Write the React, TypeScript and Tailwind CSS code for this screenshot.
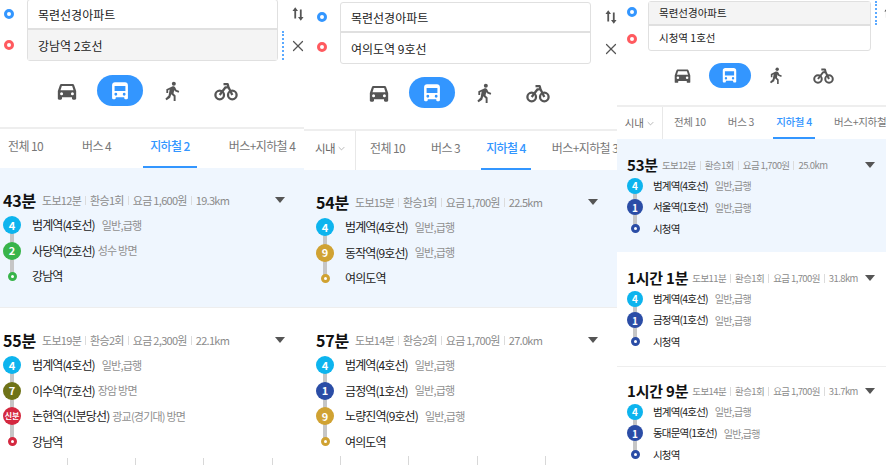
import { X } from 'lucide-react';

const LINE_COLORS: Record<string, string> = {
  '4': 'bg-[#0db4ee]',
  '2': 'bg-[#38b44a]',
  '7': 'bg-[#6f7318]',
  '9': 'bg-[#d0a232]',
  '1': 'bg-[#2b4da6]',
  '신분': 'bg-[#d4283f]',
};

const END_COLORS: Record<string, string> = {
  green: 'border-[#38b44a]',
  red: 'border-[#d4283f]',
  gold: 'border-[#d0a232]',
  navy: 'border-[#2b4da6]',
};

type Stop = { line: string; name: string; note: string };
type Route = {
  time: string;
  walk: string;
  transfer: string;
  fare: string;
  dist: string;
  stops: Stop[];
  end: string;
  endColor: string;
};

const sizes = {
  large: {
    card: 'pt-[20px]',
    time: 'text-[16px] h-[24px]',
    meta: 'text-[11px] ml-[6px] tracking-[-0.7px]',
    row: 'h-[25.7px]',
    badge: 'w-[18px] h-[18px]',
    badgeText: 'text-[11px]',
    smallBadge: 'text-[8px]',
    stopText: 'text-[12px] ml-[11px] tracking-[-0.9px]',
    endText: 'text-[12px] ml-[15px] tracking-[-0.9px]',
    noteText: 'text-[11px] tracking-[-0.8px]',
    rail: 'left-[7px] top-[13px] h-[26px]',
    end: 'w-[9px] h-[9px] border-[3px] ml-[5px]',
    pill: 'w-[46px] h-[31px]',
    slot: 'w-[53px] h-[31px]',
    icon: 'w-[20px] h-[20px]',
    bike: 'w-[24px] h-[24px]',
    input: 'h-[30px] text-[12px] pl-[10px] pt-[1px]',
    tab: 'text-[12px] tracking-[-0.6px] pb-[3px]',
  },
  small: {
    card: 'pt-[16px]',
    time: 'text-[15px] h-[20px]',
    meta: 'text-[9.5px] ml-[4px] tracking-[-0.6px]',
    row: 'h-[21.5px]',
    badge: 'w-[16px] h-[16px]',
    badgeText: 'text-[10px]',
    smallBadge: 'text-[7px]',
    stopText: 'text-[10.5px] ml-[10px] tracking-[-0.8px]',
    endText: 'text-[10.5px] ml-[13px] tracking-[-0.8px]',
    noteText: 'text-[10px] tracking-[-0.7px]',
    rail: 'left-[6px] top-[11px] h-[22px]',
    end: 'w-[9px] h-[9px] border-[3px] ml-[4px]',
    pill: 'w-[42px] h-[25px]',
    slot: 'w-[47px] h-[25px]',
    icon: 'w-[17px] h-[17px]',
    bike: 'w-[21px] h-[21px]',
    input: 'h-[24px] text-[10.5px] pl-[10px]',
    tab: 'text-[10.5px] tracking-[-0.3px]',
  },
};

type Size = typeof sizes.large;

const CarIcon = ({ className }: { className: string }) => (
  <svg viewBox="0 0 24 24" className={className} fill="#555">
    <path d="M5.500 3.500h13c1 0 1.800.6 2.100 1.500L23 12v9c0 .8-.6 1.400-1.400 1.400h-2.200c-.8 0-1.400-.6-1.400-1.400v-1.400H6V21c0 .8-.6 1.400-1.400 1.400H2.400C1.600 22.400 1 21.800 1 21v-9l2.400-7c.3-.9 1.100-1.500 2.100-1.500zM5.800 6 4.200 11h15.600l-1.600-5zM5.500 13.500a1.800 1.800 0 1 0 0 3.600 1.800 1.800 0 0 0 0-3.600zm13 0a1.800 1.800 0 1 0 0 3.600 1.800 1.800 0 0 0 0-3.600z" fillRule="evenodd" />
  </svg>
);

const BusIcon = ({ className }: { className: string }) => (
  <svg viewBox="0 0 24 24" className={className} fill="#fff">
    <path d="M6 1.500h12c2 0 3.500 1.500 3.500 3.500v15.500c0 .8-.5 1.300-1.200 1.300h-2c-.7 0-1.200-.5-1.200-1.300v-1H6.900v1c0 .8-.5 1.300-1.200 1.300h-2c-.7 0-1.200-.5-1.200-1.300V5c0-2 1.500-3.500 3.500-3.500zM5.500 6v6h13V6zm1.500 8.200a1.700 1.700 0 1 0 0 3.400 1.700 1.700 0 0 0 0-3.400zm10 0a1.700 1.700 0 1 0 0 3.400 1.700 1.700 0 0 0 0-3.400z" fillRule="evenodd" />
  </svg>
);

const WalkIcon = ({ className }: { className: string }) => (
  <svg viewBox="0 0 24 24" className={className} fill="#555">
    <circle cx="13" cy="3.200" r="2.400" />
    <path d="M11 6.500c1.500-.4 3 .1 3.700 1.300l1.300 2.700 3.500 1.500-.8 2-4.300-1.800-.9-1.500-.9 4.300 2.500 2.500v6.500h-2.300v-5.400l-2.900-2.600-1.300 4.100L4.300 23l-1.500-1.700 3.900-3.900L8 10.300l-1.800.9v3.200H4V9.800z" />
  </svg>
);

const BikeIcon = ({ className }: { className: string }) => (
  <svg viewBox="0 0 24 24" className={className} fill="none" stroke="#555" strokeWidth="2.300">
    <circle cx="5.700" cy="16" r="4.300" />
    <circle cx="18.300" cy="16" r="4.300" />
    <path d="M5.700 16 11.500 8.300h3L18.300 16M9.500 5.200h4.200l.8 3.100" strokeLinejoin="round" />
  </svg>
);

const SwapIcon = ({ className }: { className: string }) => (
  <svg viewBox="0 0 16 18" className={className} fill="#555">
    <path d="M4.300 0 8 5H5.500v10h-2.400V5H.6zM10.500 3h2.400v10h2.500l-3.700 5-3.700-5h2.500z" />
  </svg>
);

const Dot = ({ color }: { color: string }) => (
  <span className={`block w-[10px] h-[10px] rounded-full border-[3px] bg-white ${color}`} />
);

const Meta = ({ route, size }: { route: Route; size: Size }) => {
  const parts = [route.walk, route.transfer, route.fare, route.dist];
  return (
    <div className={`flex items-center text-[#8b8b8b] whitespace-nowrap ${size.meta}`}>
      {parts.map((part, i) => (
        <span key={part} className="flex items-center">
          {i > 0 && <span className="w-px h-[9px] bg-[#dcdcdc] mx-[4px]" />}
          {part}
        </span>
      ))}
    </div>
  );
};

const RouteCard = ({
  route,
  size,
  active,
  pad,
  endPad,
  height,
}: {
  route: Route;
  size: Size;
  active?: boolean;
  pad: string;
  endPad: string;
  height: string;
}) => (
  <div className={`shrink-0 border-b border-[#eeeeee] ${size.card} ${height} ${pad} ${active ? 'bg-[#eff6fe]' : 'bg-white'}`}>
    <div className={`flex items-center ${endPad}`}>
      <div className={`font-bold text-[#111] tracking-[-0.2px] flex items-center whitespace-nowrap ${size.time}`}>{route.time}</div>
      <Meta route={route} size={size} />
      <svg viewBox="0 0 10 6" className="ml-auto w-[10px] h-[6px] shrink-0" fill="#555">
        <path d="M0 0h10L5 6z" />
      </svg>
    </div>
    {route.stops.map((stop) => (
      <div key={stop.name} className={`relative flex items-center ${size.row}`}>
        <span className={`absolute w-[4px] bg-[#c6c6c6] ${size.rail}`} />
        <span
          className={`relative shrink-0 rounded-full flex items-center justify-center text-white font-bold whitespace-nowrap ${size.badge} ${stop.line === '신분' ? size.smallBadge : size.badgeText} ${LINE_COLORS[stop.line]}`}
        >
          {stop.line}
        </span>
        <span className={`text-[#222] whitespace-nowrap ${size.stopText}`}>{stop.name}</span>
        <span className={`text-[#8f8f8f] whitespace-nowrap ${size.noteText} ${stop.note === EXPRESS ? 'ml-[7px]' : 'ml-[3px]'}`}>{stop.note}</span>
      </div>
    ))}
    <div className={`relative flex items-center ${size.row}`}>
      <span className={`relative shrink-0 rounded-full bg-white ${size.end} ${END_COLORS[route.endColor]}`} />
      <span className={`text-[#222] whitespace-nowrap ${size.endText}`}>{route.end}</span>
    </div>
  </div>
);

const Tab = ({ label, active, className }: { label: string; active?: boolean; className: string }) => (
  <div
    className={`h-full flex items-center whitespace-nowrap border-b-2 ${className} ${active ? 'text-[#3396ff] font-medium border-[#3396ff]' : 'text-[#777] border-transparent'}`}
  >
    {label}
  </div>
);

const TransportModes = ({ size, className }: { size: Size; className: string }) => (
  <div className={`flex items-center shrink-0 ${className}`}>
    <div className={`flex items-center justify-center ${size.slot}`}>
      <CarIcon className={size.icon} />
    </div>
    <div className={`flex items-center justify-center ${size.slot}`}>
      <div className={`rounded-full bg-[#3396ff] flex items-center justify-center ${size.pill}`}>
        <BusIcon className={size.icon} />
      </div>
    </div>
    <div className={`flex items-center justify-center ${size.slot}`}>
      <WalkIcon className={size.icon} />
    </div>
    <div className={`flex items-center justify-center ${size.slot}`}>
      <BikeIcon className={size.bike} />
    </div>
  </div>
);

const r = (
  time: string,
  walk: string,
  transfer: string,
  fare: string,
  dist: string,
  stops: [string, string, string][],
  end: string,
  endColor: string,
): Route => ({
  time,
  walk,
  transfer,
  fare,
  dist,
  stops: stops.map(([line, name, note]) => ({ line, name, note })),
  end,
  endColor,
});

const EXPRESS = '일반,급행';

const App = () => {
  const large = sizes.large;
  const small = sizes.small;

  return (
    <div className="flex w-[886px] h-[465px] overflow-hidden bg-white" style={{ fontFamily: '"Noto Sans CJK KR", "Noto Sans", sans-serif' }}>
      {/* first capture */}
      <div className="w-[304px] shrink-0 -mt-[1px] flex flex-col overflow-hidden">
        <div className="flex shrink-0">
          <div className="w-[18px] shrink-0 flex flex-col items-center pt-[10px] gap-[21px]">
            <Dot color="border-[#3396ff]" />
            <Dot color="border-[#ff5a5f]" />
          </div>
          <div className="ml-[9px] w-[251px] shrink-0 rounded-[3px] border border-[#e0e0e0] text-[#222]">
            <div className={`flex items-center border-b-2 border-[#e0e0e0] ${large.input}`}>목련선경아파트</div>
            <div className={`flex items-center bg-[#f4f4f4] ${large.input}`}>강남역 2호선</div>
          </div>
          <div className="ml-[4px] mt-[32px] h-[29px] shrink-0 border-l-2 border-dotted border-[#5aa9ff]" />
          <div className="ml-[5px] shrink-0 flex flex-col items-center pt-[7px] gap-[15px]">
            <SwapIcon className="w-[12px] h-[16px]" />
            <X size={18} color="#555" strokeWidth={1.6} />
          </div>
        </div>
        <TransportModes size={large} className="mt-[14px] pl-[40px]" />
        <div className="mt-[21px] h-[41px] shrink-0 border-t-2 border-[#eeeeee] flex gap-[25px] pl-[1px] overflow-hidden">
          <Tab label="전체 10" className={`${large.tab} px-[7px]`} />
          <Tab label="버스 4" className={`${large.tab} px-[7px]`} />
          <Tab label="지하철 2" active className={`${large.tab} px-[7px]`} />
          <Tab label="버스+지하철 4" className={`${large.tab} px-[7px]`} />
        </div>
        <RouteCard
          active
          size={large}
          pad="pl-[3px]"
          endPad="pr-[19px]"
          height="h-[140px]"
          route={r('43분', '도보12분', '환승1회', '요금 1,600원', '19.3km', [['4', '범계역(4호선)', EXPRESS], ['2', '사당역(2호선)', '성수 방면']], '강남역', 'green')}
        />
        <RouteCard
          size={large}
          pad="pl-[3px]"
          endPad="pr-[19px]"
          height="h-[150px] !border-b-0"
          route={r('55분', '도보19분', '환승2회', '요금 2,300원', '22.1km', [['4', '범계역(4호선)', EXPRESS], ['7', '이수역(7호선)', '장암 방면'], ['신분', '논현역(신분당선)', '광교(경기대) 방면']], '강남역', 'red')}
        />
        <div className="flex pl-[67px] shrink-0">
          <span className="w-[68px] h-[10px] border-l border-[#d8d8d8]" />
          <span className="w-[68px] h-[10px] border-l border-[#d8d8d8]" />
          <span className="w-[69px] h-[10px] border-l border-[#d8d8d8]" />
          <span className="w-[32px] h-[10px] border-l border-[#d8d8d8]" />
        </div>
      </div>

      {/* second capture */}
      <div className="w-[313px] shrink-0 pt-[2px] flex flex-col overflow-hidden">
        <div className="flex shrink-0">
          <div className="w-[18px] shrink-0 ml-[9px] flex flex-col items-center pt-[10px] gap-[20px]">
            <Dot color="border-[#3396ff]" />
            <Dot color="border-[#ff5a5f]" />
          </div>
          <div className="ml-[9px] w-[251px] shrink-0 rounded-[3px] border border-[#e0e0e0] text-[#222]">
            <div className={`flex items-center border-b-2 border-[#e0e0e0] ${large.input}`}>목련선경아파트</div>
            <div className={`flex items-center ${large.input}`}>여의도역 9호선</div>
          </div>
          <div className="ml-[11px] shrink-0 flex flex-col items-center pt-[7px] gap-[15px]">
            <SwapIcon className="w-[12px] h-[16px]" />
            <X size={18} color="#555" strokeWidth={1.6} />
          </div>
        </div>
        <TransportModes size={large} className="mt-[13px] pl-[48px]" />
        <div className="mt-[21px] h-[41px] shrink-0 border-t-2 border-[#eeeeee] flex overflow-hidden">
          <div className="w-[52px] shrink-0 flex items-center justify-end pr-[10px] pb-[4px] gap-[3px] border-r border-[#e8e8e8] text-[11.5px] tracking-[-0.6px] text-[#666]">
            시내
            <svg viewBox="0 0 10 6" className="w-[7px] h-[5px]" fill="none" stroke="#999" strokeWidth="1">
              <path d="M1 1l4 4 4-4" />
            </svg>
          </div>
          <div className="flex gap-[16px] pl-[9px]">
            <Tab label="전체 10" className={`${large.tab} px-[5px]`} />
            <Tab label="버스 3" className={`${large.tab} px-[5px]`} />
            <Tab label="지하철 4" active className={`${large.tab} px-[5px]`} />
            <Tab label="버스+지하철 3" className={`${large.tab} px-[5px]`} />
          </div>
        </div>
        <RouteCard
          active
          size={large}
          pad="pl-[12px]"
          endPad="pr-[19px]"
          height="h-[138px]"
          route={r('54분', '도보15분', '환승1회', '요금 1,700원', '22.5km', [['4', '범계역(4호선)', EXPRESS], ['9', '동작역(9호선)', EXPRESS]], '여의도역', 'gold')}
        />
        <RouteCard
          size={large}
          pad="pl-[12px]"
          endPad="pr-[19px]"
          height="h-[148px] !border-b-0"
          route={r('57분', '도보14분', '환승2회', '요금 1,700원', '27.0km', [['4', '범계역(4호선)', EXPRESS], ['1', '금정역(1호선)', EXPRESS], ['9', '노량진역(9호선)', EXPRESS]], '여의도역', 'gold')}
        />
        <div className="flex pl-[36px] shrink-0">
          <span className="w-[68px] h-[10px] border-l border-[#d8d8d8]" />
          <span className="w-[69px] h-[10px] border-l border-[#d8d8d8]" />
          <span className="w-[68px] h-[10px] border-l border-[#d8d8d8]" />
          <span className="w-[68px] h-[10px] border-l border-[#d8d8d8]" />
        </div>
      </div>

      {/* third capture, slightly smaller */}
      <div className="w-[269px] shrink-0 pt-[1px] flex flex-col overflow-hidden">
        <div className="flex shrink-0">
          <div className="w-[16px] shrink-0 ml-[7px] flex flex-col items-center pt-[6px] gap-[17px]">
            <Dot color="border-[#3396ff]" />
            <Dot color="border-[#ff5a5f]" />
          </div>
          <div className="ml-[8px] w-[223px] shrink-0 rounded-[3px] border border-[#e0e0e0] text-[#222]">
            <div className={`flex items-center bg-[#f4f4f4] border-b-2 border-[#e0e0e0] ${small.input}`}>목련선경아파트</div>
            <div className={`flex items-center ${small.input}`}>시청역 1호선</div>
          </div>
          <div className="ml-[4px] h-[24px] shrink-0 border-l-2 border-dotted border-[#5aa9ff]" />
          <div className="ml-[7px] shrink-0 pt-[6px]">
            <SwapIcon className="w-[10px] h-[14px]" />
          </div>
        </div>
        <TransportModes size={small} className="mt-[12px] pl-[42px]" />
        <div className="mt-[17px] h-[34px] shrink-0 border-t-2 border-[#eeeeee] flex overflow-hidden">
          <div className="w-[46px] shrink-0 flex items-center justify-end pr-[8px] gap-[3px] border-r border-[#e8e8e8] text-[10.5px] text-[#666]">
            시내
            <svg viewBox="0 0 10 6" className="w-[7px] h-[5px]" fill="none" stroke="#999" strokeWidth="1">
              <path d="M1 1l4 4 4-4" />
            </svg>
          </div>
          <div className="flex gap-[16px] pl-[8px]">
            <Tab label="전체 10" className={`${small.tab} px-[3px]`} />
            <Tab label="버스 3" className={`${small.tab} px-[3px]`} />
            <Tab label="지하철 4" active className={`${small.tab} px-[3px]`} />
            <Tab label="버스+지하철 3" className={`${small.tab} px-[3px]`} />
          </div>
        </div>
        <RouteCard
          active
          size={small}
          pad="pl-[10px]"
          endPad="pr-[11px]"
          height="h-[113px] !border-b-0"
          route={r('53분', '도보12분', '환승1회', '요금 1,700원', '25.0km', [['4', '범계역(4호선)', EXPRESS], ['1', '서울역(1호선)', EXPRESS]], '시청역', 'navy')}
        />
        <RouteCard
          size={small}
          pad="pl-[10px]"
          endPad="pr-[11px]"
          height="h-[115px]"
          route={r('1시간 1분', '도보11분', '환승1회', '요금 1,700원', '31.8km', [['4', '범계역(4호선)', EXPRESS], ['1', '금정역(1호선)', EXPRESS]], '시청역', 'navy')}
        />
        <RouteCard
          size={small}
          pad="pl-[10px]"
          endPad="pr-[11px]"
          height="h-[100px] !border-b-0 !pt-[14px]"
          route={r('1시간 9분', '도보14분', '환승1회', '요금 1,700원', '31.7km', [['4', '범계역(4호선)', EXPRESS], ['1', '동대문역(1호선)', EXPRESS]], '시청역', 'navy')}
        />
      </div>
    </div>
  );
};

export default App;
